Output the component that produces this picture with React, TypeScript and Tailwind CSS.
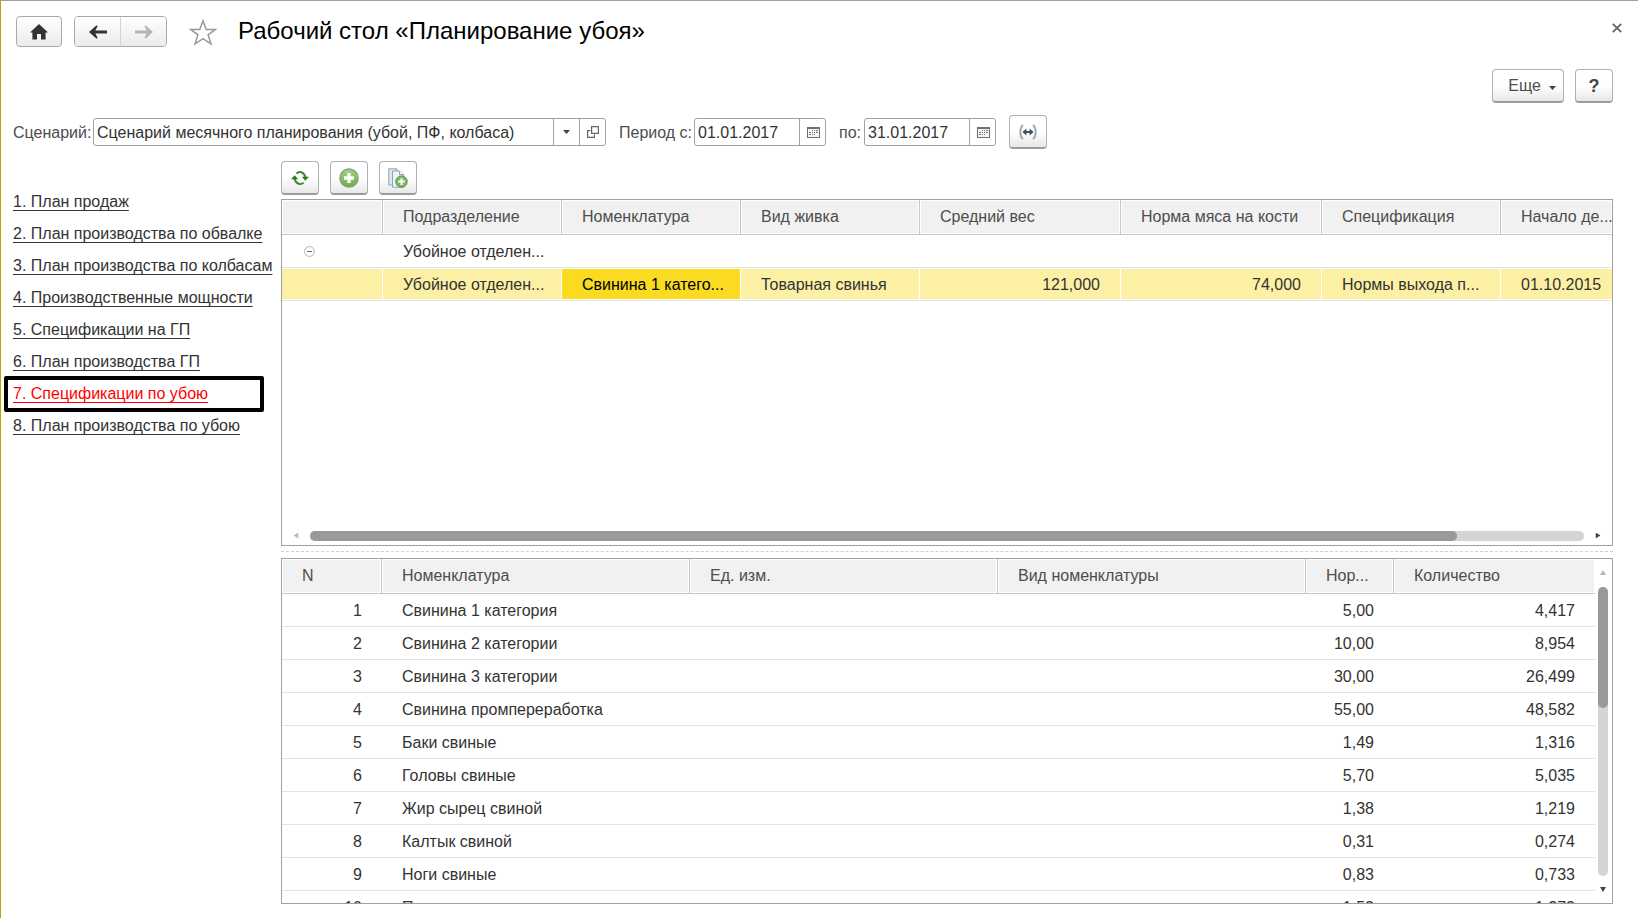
import type { ReactNode } from "react";

const LINKS = [
  "1. План продаж",
  "2. План производства по обвалке",
  "3. План производства по колбасам",
  "4. Производственные мощности",
  "5. Спецификации на ГП",
  "6. План производства ГП",
  "7. Спецификации по убою",
  "8. План производства по убою",
];

const ACTIVE_LINK = 6;

const SPEC_HEADERS = [
  "",
  "Подразделение",
  "Номенклатура",
  "Вид живка",
  "Средний вес",
  "Норма мяса на кости",
  "Спецификация",
  "Начало де...",
];

const OUTPUT_ROWS = [
  ["1", "Свинина 1 категория", "5,00", "4,417"],
  ["2", "Свинина 2 категории", "10,00", "8,954"],
  ["3", "Свинина 3 категории", "30,00", "26,499"],
  ["4", "Свинина промпереработка", "55,00", "48,582"],
  ["5", "Баки свиные", "1,49", "1,316"],
  ["6", "Головы свиные", "5,70", "5,035"],
  ["7", "Жир сырец свиной", "1,38", "1,219"],
  ["8", "Калтык свиной", "0,31", "0,274"],
  ["9", "Ноги свиные", "0,83", "0,733"],
  ["10", "Почки свиные", "1,52", "1,272"],
];

const raisedButton =
  "flex h-[34px] items-center justify-center rounded-[4px] border border-[#b0b0b0] border-b-2 border-b-[#9c9c9c] bg-linear-to-b from-white from-50% to-[#e8e8e8]";
const navButton =
  "flex items-center justify-center bg-linear-to-b from-white to-[#ebebeb]";
const fieldBox =
  "flex h-7 items-stretch rounded-[3px] border border-[#a0a0a0] bg-white";
const fieldInput = "min-w-0 flex-1 pt-0.5 pl-[3px] text-[#333] outline-none";
const fieldLabel = "pt-0.5 text-[#4d4d4d]";
const fieldButton =
  "flex w-[26px] shrink-0 items-center justify-center border-l border-[#a0a0a0]";
const headCell =
  "h-[35px] overflow-hidden border-b border-r border-[#c6c6c6] bg-[#f1f1f1] pl-5 text-left font-normal whitespace-nowrap text-[#4d4d4d] shadow-[inset_0_0_0_1px_#fff] last:border-r-0";

function HomeIcon() {
  return (
    <svg width="18" height="16" viewBox="0 0 18 16" fill="#333">
      <path d="M9 0 18 8.4H15.6V15.4H11V10H7V15.4H2.4V8.4H0Z" />
    </svg>
  );
}

function ArrowIcon({ flip, color }: { flip?: boolean; color: string }) {
  return (
    <svg
      width="18"
      height="14"
      viewBox="0 0 18 14"
      fill={color}
      className={flip ? "-scale-x-100" : ""}
    >
      <path d="M0 7 7.5 .2 8.6 1.2 6.4 5.6H18V8.4H6.4L8.6 12.8 7.5 13.8Z" />
    </svg>
  );
}

function StarIcon() {
  return (
    <svg width="28" height="27" viewBox="0 0 28 27" fill="none" stroke="#999" strokeWidth="1.5">
      <path d="M14 1.8 17.2 10.4H26.4L19.1 15.9 22 25 14 19.6 6 25 8.9 15.9 1.6 10.4H10.8Z" />
    </svg>
  );
}

function OpenIcon() {
  return (
    <svg width="12" height="12" viewBox="0 0 12 12" fill="none" stroke="#666" strokeWidth="1.2">
      <path d="M4.6 .6H11.4V7.4H4.6Z" />
      <path d="M3.6 4.6H.6V11.4H7.4V8.6" />
    </svg>
  );
}

function CalendarIcon() {
  return (
    <svg width="13" height="11" viewBox="0 0 13 11">
      <path d="M0 0H13V11H0Z" fill="#707070" />
      <path d="M1 2H12V10H1Z" fill="#f4f4f4" />
      <path
        d="M5 3.5H6M7 3.5H8M9 3.5H11M2 5.5H4M5 5.5H6M7 5.5H8M9 5.5H11M2 7.5H4M5 7.5H6M7 7.5H8"
        stroke="#777"
      />
    </svg>
  );
}

function PeriodIcon() {
  return (
    <svg width="18" height="16" viewBox="0 0 18 16" fill="none">
      <path d="M4 .8C.4 4 .4 12 4 15.2M14 .8C17.6 4 17.6 12 14 15.2" stroke="#9aa5ad" strokeWidth="1.8" />
      <path d="M3.4 8 7.4 4.4V7H10.6V4.4L14.6 8 10.6 11.6V9H7.4V11.6Z" fill="#3d4f5c" />
    </svg>
  );
}

function RefreshIcon() {
  return (
    <svg width="18" height="16" viewBox="0 0 18 16" fill="none">
      <path d="M5.4 3.6C8 .8 13 1.6 14.4 7M12.6 12.6C10 15.2 5 14.4 3.6 9" stroke="#3f8a2c" strokeWidth="2" />
      <path d="M10.8 6.8H18L14.4 10.8ZM7.2 9.2H0L3.6 5.2Z" fill="#2c7a1c" />
    </svg>
  );
}

function AddIcon() {
  return (
    <svg width="20" height="20" viewBox="0 0 20 20">
      <defs>
        <linearGradient id="add" x1="0" y1="0" x2="0" y2="1">
          <stop offset="0" stopColor="#a5cf8b" />
          <stop offset="1" stopColor="#69ad45" />
        </linearGradient>
      </defs>
      <circle cx="10" cy="10" r="9.2" fill="url(#add)" stroke="#8c9c84" strokeWidth="1.2" />
      <path d="M8.3 5H11.7V8.3H15V11.7H11.7V15H8.3V11.7H5V8.3H8.3Z" fill="#fff" />
    </svg>
  );
}

function CopyIcon() {
  return (
    <svg width="20" height="20" viewBox="0 0 20 20">
      <path d="M.8 .8H9V17H.8Z" fill="#dce8f0" stroke="#8fa5b8" />
      <path d="M4.5 3H11.5L15.5 6.5V19.2H4.5Z" fill="#eef4f8" stroke="#8fa5b8" />
      <path d="M11.5 3V6.5H15.5" fill="#fff" stroke="#8fa5b8" />
      <circle cx="13.5" cy="13.6" r="5.7" fill="#7fb862" stroke="#61894d" />
      <path d="M12.5 10.3H14.5V12.6H16.8V14.6H14.5V16.9H12.5V14.6H10.2V12.6H12.5Z" fill="#fff" />
    </svg>
  );
}

function Caret() {
  return (
    <svg width="7" height="4" viewBox="0 0 7 4" fill="#444">
      <path d="M0 0H7L3.5 4Z" />
    </svg>
  );
}

function Triangle({ className }: { className?: string }) {
  return (
    <svg width="6" height="5" viewBox="0 0 6 5" fill="currentColor" className={className}>
      <path d="M0 0H6L3 5Z" />
    </svg>
  );
}

function ToolButton({ label, children }: { label: string; children: ReactNode }) {
  return (
    <button type="button" aria-label={label} className={`w-[38px] ${raisedButton}`}>
      {children}
    </button>
  );
}

function DateField({ id, value }: { id: string; value: string }) {
  return (
    <div className={`w-[132px] ${fieldBox}`}>
      <input id={id} defaultValue={value} className={fieldInput} />
      <button type="button" aria-label="Выбрать дату" className={`pt-px pl-px ${fieldButton}`}>
        <CalendarIcon />
      </button>
    </div>
  );
}

function TitleBar() {
  return (
    <header className="flex items-start pt-[15px] pr-4 pl-[15px]">
      <button
        type="button"
        aria-label="Домой"
        className={`h-[31px] w-[46px] rounded-[4px] border border-[#a9a9a9] ${navButton}`}
      >
        <HomeIcon />
      </button>
      <div className="ml-3 flex h-[31px] w-[93px] overflow-hidden rounded-[4px] border border-[#a9a9a9]">
        <button type="button" aria-label="Назад" className={`flex-1 ${navButton}`}>
          <ArrowIcon color="#333" />
        </button>
        <button
          type="button"
          aria-label="Вперед"
          className={`flex-1 border-l border-[#d4d4d4] ${navButton}`}
        >
          <ArrowIcon flip color="#b5b5b5" />
        </button>
      </div>
      <button type="button" aria-label="В избранное" className="mt-[3px] ml-[22px]">
        <StarIcon />
      </button>
      <h1 className="ml-[21px] flex-1 text-[24px] leading-[30px] text-black">
        Рабочий стол «Планирование убоя»
      </h1>
      <button type="button" aria-label="Закрыть" className="mt-[7px]">
        <svg width="10" height="10" viewBox="0 0 10 10" stroke="#666" strokeWidth="1.8">
          <path d="M.8 .8 9.2 9.2M9.2 .8 .8 9.2" />
        </svg>
      </button>
    </header>
  );
}

function Filters() {
  return (
    <form className="mt-3 flex h-[34px] items-center pl-3">
      <label htmlFor="scenario" className={`w-20 ${fieldLabel}`}>
        Сценарий:
      </label>
      <div className={`w-[513px] ${fieldBox}`}>
        <input
          id="scenario"
          defaultValue="Сценарий месячного планирования (убой, ПФ, колбаса)"
          className={fieldInput}
        />
        <button type="button" aria-label="Выбрать" className={fieldButton}>
          <Caret />
        </button>
        <button type="button" aria-label="Открыть" className={fieldButton}>
          <OpenIcon />
        </button>
      </div>
      <label htmlFor="from" className={`ml-[13px] w-[75px] ${fieldLabel}`}>
        Период с:
      </label>
      <DateField id="from" value="01.01.2017" />
      <label htmlFor="to" className={`ml-[13px] w-[25px] ${fieldLabel}`}>
        по:
      </label>
      <DateField id="to" value="31.01.2017" />
      <div className="ml-[13px]">
        <ToolButton label="Период">
          <PeriodIcon />
        </ToolButton>
      </div>
    </form>
  );
}

function Sidebar() {
  return (
    <nav className="w-[268px] shrink-0 pt-[25px]">
      <ul>
        {LINKS.map((link, index) => (
          <li key={link} className="relative flex h-8 items-center">
            <a
              href="#"
              className={`whitespace-nowrap underline decoration-1 underline-offset-3 ${
                index === ACTIVE_LINK ? "text-[#f00]" : "text-[#333]"
              }`}
            >
              {link}
            </a>
            {index === ACTIVE_LINK ? (
              <span className="pointer-events-none absolute -top-0.5 -left-[9px] h-9 w-[260px] rounded-[2px] border-4 border-black" />
            ) : null}
          </li>
        ))}
      </ul>
    </nav>
  );
}

function SpecTable() {
  const rowCell = "h-[33px] border-b border-b-[#e3e3e3] pt-0.5";
  const selected =
    "overflow-hidden border-r border-r-white shadow-[inset_0_1px_0_#fff,inset_0_-1px_0_#fff] last:border-r-0";
  const highlighted = `bg-[#fcf0a5] ${rowCell} ${selected}`;

  return (
    <section className="flex min-h-0 flex-1 flex-col border border-[#a0a0a0]">
      <table className="w-full table-fixed border-separate border-spacing-0 whitespace-nowrap">
        <colgroup>
          <col className="w-[101px]" />
          <col className="w-[179px]" />
          <col className="w-[179px]" />
          <col className="w-[179px]" />
          <col className="w-[201px]" />
          <col className="w-[201px]" />
          <col className="w-[179px]" />
          <col />
        </colgroup>
        <thead>
          <tr>
            {SPEC_HEADERS.map((header) => (
              <th key={header} className={headCell}>
                {header}
              </th>
            ))}
          </tr>
        </thead>
        <tbody>
          <tr>
            <td className="h-[33px] border-b border-[#e3e3e3] pl-[22px]">
              <button type="button" aria-label="Свернуть" className="block">
                <svg width="11" height="11" viewBox="0 0 11 11" fill="none">
                  <circle cx="5.5" cy="5.5" r="4.9" stroke="#b0b0b0" />
                  <path d="M3 5.5H8" stroke="#666" />
                </svg>
              </button>
            </td>
            <td className={`pl-5 ${rowCell}`}>Убойное отделен...</td>
            <td colSpan={6} className={rowCell} />
          </tr>
          <tr>
            <td className={highlighted} />
            <td className={`pl-5 ${highlighted}`}>Убойное отделен...</td>
            <td className={`bg-[#fadb21] pl-5 text-black ${rowCell} ${selected}`}>
              Свинина 1 катего...
            </td>
            <td className={`pl-5 ${highlighted}`}>Товарная свинья</td>
            <td className={`pr-5 text-right ${highlighted}`}>121,000</td>
            <td className={`pr-5 text-right ${highlighted}`}>74,000</td>
            <td className={`pl-5 ${highlighted}`}>Нормы выхода п...</td>
            <td className={`pl-5 ${highlighted}`}>01.10.2015</td>
          </tr>
        </tbody>
      </table>
      <div className="mt-auto mb-1 flex items-center pr-[11px] pl-[11px] text-[#444]">
        <Triangle className="rotate-90 text-[#b8b8b8]" />
        <div className="mx-[11px] h-[10px] flex-1 rounded-full bg-[#d4d4d4]">
          <div className="h-full w-[90%] rounded-full bg-[#999]" />
        </div>
        <Triangle className="-rotate-90" />
      </div>
    </section>
  );
}

function OutputTable() {
  const cell = "h-[33px] border-b border-[#e3e3e3] pt-0.5";

  return (
    <section className="flex min-h-0 flex-1 overflow-hidden border border-[#a0a0a0]">
      <div className="min-w-0 flex-1">
        <table className="w-full table-fixed border-separate border-spacing-0 whitespace-nowrap">
          <colgroup>
            <col className="w-[100px]" />
            <col />
            <col />
            <col />
            <col className="w-[88px]" />
            <col className="w-[201px]" />
          </colgroup>
          <thead>
            <tr>
              <th className={headCell}>N</th>
              <th className={headCell}>Номенклатура</th>
              <th className={headCell}>Ед. изм.</th>
              <th className={headCell}>Вид номенклатуры</th>
              <th className={headCell}>Нор...</th>
              <th className={headCell}>Количество</th>
            </tr>
          </thead>
          <tbody>
            {OUTPUT_ROWS.map(([n, name, norm, amount]) => (
              <tr key={n}>
                <td className={`pr-5 text-right ${cell}`}>{n}</td>
                <td className={`pl-5 ${cell}`}>{name}</td>
                <td className={cell} />
                <td className={cell} />
                <td className={`pr-5 text-right ${cell}`}>{norm}</td>
                <td className={`pr-5 text-right ${cell}`}>{amount}</td>
              </tr>
            ))}
          </tbody>
        </table>
      </div>
      <div className="flex w-[17px] shrink-0 flex-col items-center pt-[11px] pr-px pb-[11px] text-[#444]">
        <Triangle className="rotate-180 text-[#b8b8b8]" />
        <div className="mt-3 mb-[11px] w-[10px] flex-1 rounded-full bg-[#d4d4d4]">
          <div className="h-[42%] w-full rounded-full bg-[#999]" />
        </div>
        <Triangle />
      </div>
    </section>
  );
}

export default function App() {
  return (
    <div className="flex h-screen flex-col border-t border-l border-t-[#a0a0a0] border-l-[#c4a000] bg-white pb-[14px] font-['Liberation_Sans',Arial,sans-serif] text-[16px] leading-5 text-[#333]">
      <TitleBar />
      <div className="mt-[22px] flex justify-end gap-[11px] pr-[25px]">
        <button
          type="button"
          className={`w-[72px] gap-2 pl-2 text-[#4d4d4d] ${raisedButton}`}
        >
          Еще
          <span className="pt-1">
            <Caret />
          </span>
        </button>
        <button
          type="button"
          className={`w-[38px] text-[18px] font-bold text-[#444] ${raisedButton}`}
        >
          ?
        </button>
      </div>
      <Filters />
      <div className="mt-3 flex min-h-0 flex-1 pr-[25px] pl-3">
        <Sidebar />
        <main className="flex min-w-0 flex-1 flex-col">
          <div className="flex gap-[11px] pb-1">
            <ToolButton label="Обновить">
              <RefreshIcon />
            </ToolButton>
            <ToolButton label="Добавить">
              <AddIcon />
            </ToolButton>
            <ToolButton label="Скопировать">
              <CopyIcon />
            </ToolButton>
          </div>
          <SpecTable />
          <div className="mt-[5px] mb-1.5 border-t border-dashed border-[#d0d0d0]" />
          <OutputTable />
        </main>
      </div>
    </div>
  );
}
